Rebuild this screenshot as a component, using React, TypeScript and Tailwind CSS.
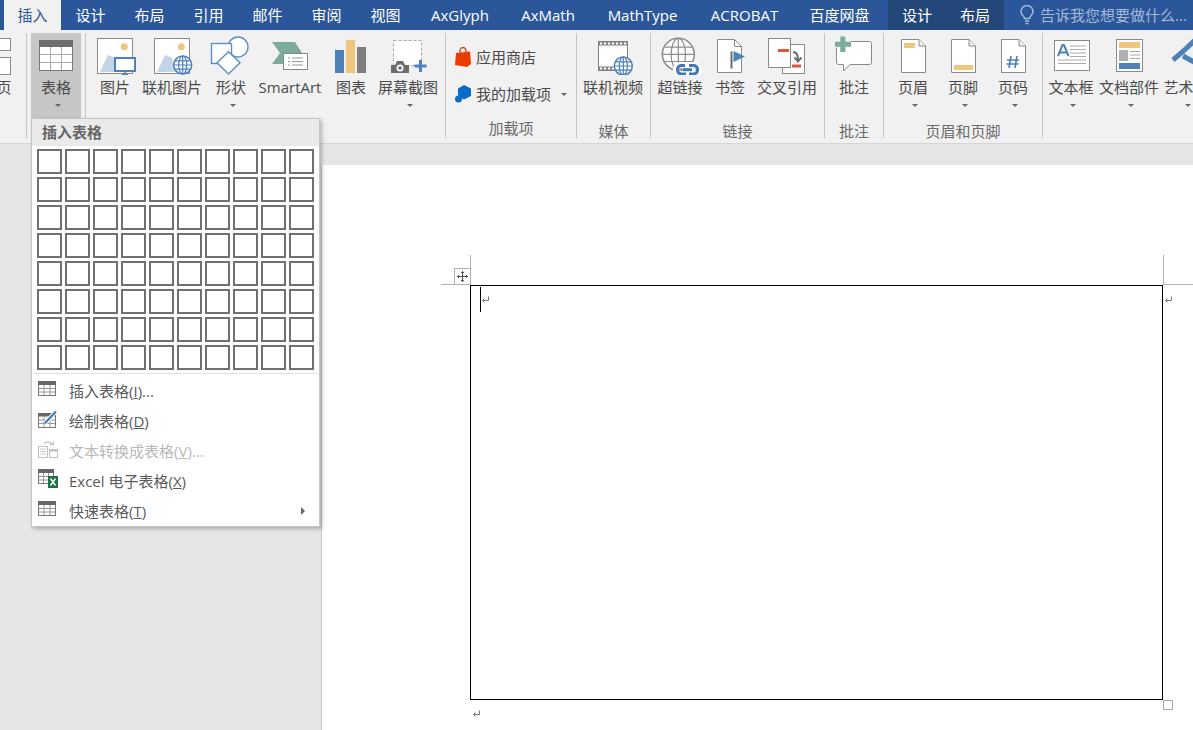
import type { ReactNode } from "react";

const TABS = [
  { label: "设计", w: "w-[59px]" },
  { label: "布局", w: "w-[59px]" },
  { label: "引用", w: "w-[59px]" },
  { label: "邮件", w: "w-[59px]" },
  { label: "审阅", w: "w-[59px]" },
  { label: "视图", w: "w-[59px]" },
  { label: "AxGlyph", w: "w-[90px]" },
  { label: "AxMath", w: "w-[86px]" },
  { label: "MathType", w: "w-[103px]" },
  { label: "ACROBAT", w: "w-[101px]" },
  { label: "百度网盘", w: "w-[89px]" },
];

function Globe({ cx, cy, r = 9, color = "#4e81b8" }: { cx: number; cy: number; r?: number; color?: string }) {
  return (
    <g fill="none" stroke={color} strokeWidth="1.2">
      <circle cx={cx} cy={cy} r={r} fill="#fff" strokeWidth="1.5" />
      <ellipse cx={cx} cy={cy} rx={r * 0.45} ry={r} />
      <path d={`M${cx} ${cy - r}V${cy + r}M${cx - r} ${cy}H${cx + r}M${cx - r * 0.85} ${cy - r * 0.45}H${cx + r * 0.85}M${cx - r * 0.85} ${cy + r * 0.45}H${cx + r * 0.85}`} />
    </g>
  );
}

function Picture({ online }: { online?: boolean }) {
  return (
    <svg width="44" height="40" viewBox="0 0 44 40">
      <rect x="4.5" y="3.5" width="35" height="35" fill="#fff" stroke="#8a8a8a" />
      <circle cx="31.3" cy="11.7" r="3.5" fill="#f0c67f" />
      <path d="M7 37L15 20L22 23L26 37Z" fill="#c1d4e8" />
      {online ? (
        <Globe cx={32.7} cy={30} />
      ) : (
        <>
          <rect x="22" y="23" width="20" height="13" fill="#fff" stroke="#4e81b8" strokeWidth="2" />
          <path d="M32 36V40M29 39.5H35" stroke="#4e81b8" strokeWidth="1.5" />
        </>
      )}
    </svg>
  );
}

function Shapes() {
  return (
    <svg width="44" height="40" viewBox="0 0 44 40" fill="#fff" stroke="#5d8fc2" strokeWidth="1.4">
      <circle cx="29" cy="12" r="10" />
      <rect x="2.5" y="8.5" width="20" height="20" />
      <path d="M19.5 16.7L31 27.8L19.5 39L8 27.8Z" />
    </svg>
  );
}

function SmartArtIcon() {
  return (
    <svg width="44" height="40" viewBox="0 0 44 40">
      <path d="M4 7H27L34 18H15V29H4L12 18Z" fill="#7bab9a" />
      <rect x="15.5" y="18.5" width="24" height="16" fill="#fff" stroke="#888" />
      <path d="M20 23H22M24 23H35M20 26.5H22M24 26.5H35M20 30H22M24 30H35" stroke="#999" />
    </svg>
  );
}

function Chart() {
  return (
    <svg width="44" height="40" viewBox="0 0 44 40">
      <rect x="6" y="15" width="9" height="23" fill="#4e81b8" />
      <rect x="17" y="5" width="9" height="33" fill="#f0c67f" />
      <rect x="28" y="12" width="9" height="26" fill="#7f7f7f" />
    </svg>
  );
}

function Screenshot() {
  return (
    <svg width="44" height="40" viewBox="0 0 44 40">
      <rect x="7.5" y="5.5" width="28" height="25" fill="#fff" stroke="#aaa" strokeDasharray="3 2" />
      <path d="M5 30H9L11 26H17L19 30H23V38H5Z" fill="#6d6d6d" />
      <circle cx="14" cy="33" r="3.5" fill="#fff" />
      <circle cx="14" cy="33" r="1.8" fill="#6d6d6d" />
      <path d="M26 31H28" stroke="#aaa" />
      <path d="M28.5 31H40.5M34.5 25V37" stroke="#4e81b8" strokeWidth="3" />
    </svg>
  );
}

function Film() {
  const holes = [9, 13, 17, 21, 25, 29, 33];
  return (
    <svg width="44" height="40" viewBox="0 0 44 40">
      <rect x="7.5" y="6.5" width="29" height="29" fill="#fff" stroke="#808080" />
      <rect x="7.5" y="6.5" width="29" height="4" fill="#808080" />
      <rect x="7.5" y="31.5" width="29" height="4" fill="#808080" />
      {holes.map((x) => (
        <g key={x} fill="#fff">
          <rect x={x} y="7.5" width="2.2" height="2" />
          <rect x={x} y="32.5" width="2.2" height="2" />
        </g>
      ))}
      <Globe cx={32.3} cy={31} />
    </svg>
  );
}

function Hyperlink() {
  return (
    <svg width="44" height="40" viewBox="0 0 44 40">
      <Globe cx={20.3} cy={19.3} r={16} color="#8c8c8c" />
      <g fill="none" stroke="#fff" strokeWidth="6">
        <rect x="18" y="30" width="13" height="9" rx="4.5" />
        <rect x="28" y="30" width="13" height="9" rx="4.5" />
      </g>
      <g fill="none" stroke="#3e7ab8" strokeWidth="3">
        <path d="M27 30.5H22.5A4.5 4.5 0 0 0 22.5 39H28" />
        <path d="M31 30.5H36.5A4.5 4.5 0 0 1 36.5 39H31" />
        <path d="M25 34.7H34" />
      </g>
    </svg>
  );
}

function Bookmark() {
  return (
    <svg width="44" height="40" viewBox="0 0 44 40">
      <path d="M9.5 4.5H26.5L33.5 11.5V37.5H9.5Z" fill="#fff" stroke="#8a8a8a" />
      <path d="M26.5 4.5V11.5H33.5" fill="none" stroke="#8a8a8a" />
      <rect x="22.5" y="16.5" width="2" height="17" fill="#6d6d6d" />
      <path d="M25.5 16L37 21.5L25.5 27Z" fill="#4e81b8" />
    </svg>
  );
}

function CrossRef() {
  return (
    <svg width="44" height="40" viewBox="0 0 44 40">
      <rect x="17.5" y="9.5" width="22" height="29" fill="#fff" stroke="#8a8a8a" />
      <rect x="3.5" y="3.5" width="22" height="29" fill="#fff" stroke="#8a8a8a" />
      <rect x="13" y="14" width="11" height="3" fill="#d9583b" />
      <rect x="27" y="29.5" width="9" height="3" fill="#d9583b" />
      <path d="M28 17C32 17 33 20 33 25M29.5 22.5L33 26.5L36.5 22.5" fill="none" stroke="#6d6d6d" strokeWidth="2" />
    </svg>
  );
}

function Comment() {
  return (
    <svg width="44" height="40" viewBox="0 0 44 40">
      <path d="M6.5 6.5H37.5A2 2 0 0 1 39.5 8.5V27.5A2 2 0 0 1 37.5 29.5H18L11.5 36V29.5H6.5A2 2 0 0 1 4.5 27.5V8.5A2 2 0 0 1 6.5 6.5Z" fill="#fff" stroke="#8a8a8a" />
      <path d="M3 9.3H19M10.8 2V17" stroke="#eef5f2" strokeWidth="7" />
      <path d="M3 9.3H19M10.8 1.5V17" stroke="#7bab9a" strokeWidth="5" />
    </svg>
  );
}

function PageIcon({ children }: { children?: ReactNode }) {
  return (
    <svg width="44" height="40" viewBox="0 0 44 40">
      <path d="M10.5 4.5H28L34.5 11V37.5H10.5Z" fill="#fff" stroke="#8a8a8a" />
      <path d="M28 4.5V11H34.5" fill="#f1f1f1" stroke="#8a8a8a" />
      {children}
    </svg>
  );
}

function TextBoxIcon() {
  return (
    <svg width="44" height="40" viewBox="0 0 44 40">
      <rect x="5.5" y="5.5" width="35" height="30" fill="#fff" stroke="#8a8a8a" />
      <path d="M9 21L13.5 10H15L19.5 21M11 17.5H17.5" fill="none" stroke="#4e81b8" strokeWidth="2" />
      <path d="M21 11H37M21 14.5H37M21 18H37M21 21.5H37M9 25H37M9 28.5H37" stroke="#aaa" />
    </svg>
  );
}

function DocParts() {
  return (
    <svg width="44" height="40" viewBox="0 0 44 40">
      <rect x="9.5" y="4.5" width="26" height="32" fill="#fff" stroke="#8a8a8a" />
      <rect x="12" y="7" width="21" height="6" fill="#f0c67f" />
      <rect x="12" y="15" width="9" height="11" fill="#b0b0b0" />
      <path d="M23 16.5H33M23 20H33M23 23.5H33" stroke="#aaa" />
      <rect x="12" y="28" width="21" height="6" fill="#4e81b8" />
    </svg>
  );
}

function WordArt() {
  return (
    <svg width="44" height="40" viewBox="0 0 44 40" className="overflow-visible">
      <path d="M9 25C15 20 23 13 31 5L37 33M19 21L30 27" fill="none" stroke="#4e81b8" strokeWidth="5" />
    </svg>
  );
}

function TableIcon() {
  return (
    <svg width="34" height="31" viewBox="0 0 34 31">
      <rect x="0.5" y="0.5" width="33" height="30" fill="#fff" stroke="#7a7a7a" />
      <rect x="0" y="0" width="34" height="7" fill="#6d6d6d" />
      <path d="M11.5 7V30M22.5 7V30M1 14.5H33M1 22.5H33" stroke="#a8a8a8" />
    </svg>
  );
}

function SmallTable() {
  return (
    <svg width="18" height="15" viewBox="0 0 18 15">
      <rect x="0.5" y="0.5" width="17" height="14" fill="#fff" stroke="#777" />
      <rect x="0" y="0" width="18" height="4" fill="#666" />
      <path d="M6 4V14M12 4V14M1 7.5H17M1 11H17" stroke="#999" />
    </svg>
  );
}

function DrawTable() {
  return (
    <svg width="20" height="18" viewBox="0 0 20 18" className="overflow-visible">
      <rect x="0.5" y="3.5" width="17" height="14" fill="#fff" stroke="#777" />
      <rect x="0" y="3" width="18" height="3.5" fill="#666" />
      <path d="M6 6V17M12 6V17M1 10H17M1 13.5H17" stroke="#999" />
      <path d="M7 13L18 1.5" stroke="#fff" strokeWidth="4" />
      <path d="M7 13L18 1.5" stroke="#3e7ab8" strokeWidth="2.2" />
    </svg>
  );
}

function ConvertTable() {
  return (
    <svg width="20" height="18" viewBox="0 0 20 18" className="opacity-60">
      <rect x="0.5" y="6.5" width="9" height="11" fill="#fff" stroke="#999" />
      <path d="M2 9H8M2 11.5H8M2 14H8" stroke="#aaa" />
      <rect x="11.5" y="9.5" width="8" height="8" fill="#fff" stroke="#999" />
      <rect x="11" y="9" width="9" height="2.5" fill="#999" />
      <path d="M6 4C8 1 12 1 14 4.5M12 4.5H15.5V1.5" fill="none" stroke="#999" strokeWidth="1.2" />
    </svg>
  );
}

function ExcelTable() {
  return (
    <svg width="20" height="19" viewBox="0 0 20 19">
      <rect x="0.5" y="0.5" width="15" height="14" fill="#fff" stroke="#777" />
      <rect x="0" y="0" width="16" height="4" fill="#666" />
      <path d="M5.5 4V14M10.5 4V14M1 7.5H15M1 11H15" stroke="#999" />
      <rect x="10" y="7" width="10" height="12" fill="#1f7145" />
      <path d="M12.5 9.5L17.5 16.5M17.5 9.5L12.5 16.5" stroke="#fff" strokeWidth="1.4" />
    </svg>
  );
}

function ReturnMark() {
  return (
    <svg width="8" height="8" viewBox="0 0 8 8" fill="none" stroke="#777">
      <path d="M7.5 0.5V4.5H1.5M3.5 2.5L1.5 4.5L3.5 6.5" />
    </svg>
  );
}

function Caret() {
  return <div className="h-0 w-0 border-x-[3.5px] border-t-[3px] border-x-transparent border-t-[#666]" />;
}

function RibbonButton({ w, label, arrow, children }: { w: string; label: string; arrow?: boolean; children: ReactNode }) {
  return (
    <div className={`${w} flex h-[85px] shrink-0 flex-col items-center`}>
      <div className="mt-[2px] flex h-[40px] items-center justify-center">{children}</div>
      <div className="mt-[2px] h-[20px] whitespace-nowrap text-[15px] leading-[20px] text-[#4a4a4a]">{label}</div>
      {arrow && (
        <div className="ml-[4px] mt-[7px]">
          <Caret />
        </div>
      )}
    </div>
  );
}

function Group({ w, label, pad, children }: { w: string; label?: string; pad?: string; children: ReactNode }) {
  return (
    <div className={`${w} flex h-[105px] shrink-0 flex-col border-r border-[#c6c6c6]`}>
      <div className={`flex h-[85px] ${pad ?? ""}`}>{children}</div>
      {label && <div className="mt-[3px] whitespace-nowrap text-center text-[15px] leading-[20px] text-[#6a6a6a]">{label}</div>}
    </div>
  );
}

function MenuRow({ icon, disabled, right, children }: { icon: ReactNode; disabled?: boolean; right?: boolean; children: ReactNode }) {
  return (
    <div className={`flex h-[30px] items-center text-[15px] ${disabled ? "text-[#b8b8b8]" : "text-[#5a5a5a]"}`}>
      <div className="mb-[5px] w-[37px] shrink-0 pl-[6px]">{icon}</div>
      <span className="whitespace-nowrap">{children}</span>
      {right && <div className="ml-auto mr-[14px] h-0 w-0 border-y-[4px] border-l-[4px] border-y-transparent border-l-[#666]" />}
    </div>
  );
}

export default function App() {
  return (
    <div className="relative flex h-[730px] w-[1193px] flex-col overflow-hidden bg-[#e6e6e6] font-['Open_Sans','Noto_Sans_CJK_SC',sans-serif]">
      <div className="flex h-[30px] shrink-0 items-center bg-[#2b579a] text-[15px] text-white">
        <div className="ml-[4px] flex h-full w-[57px] items-center justify-center bg-[#f1f1f1] text-[#2b579a]">插入</div>
        {TABS.map((t) => (
          <div key={t.label} className={`${t.w} flex h-full shrink-0 items-center justify-center`}>
            {t.label}
          </div>
        ))}
        <div className="ml-[4px] flex h-full w-[116px] shrink-0 bg-[#234779]">
          <div className="flex flex-1 items-center justify-center">设计</div>
          <div className="flex flex-1 items-center justify-center">布局</div>
        </div>
        <div className="ml-[16px] flex items-center gap-[6px] whitespace-nowrap text-[#a3b9d8]">
          <svg width="14" height="20" viewBox="0 0 14 20" fill="none" stroke="#a3b9d8" strokeWidth="1.5">
            <path d="M4.5 13.5C4.5 11 1 10 1 6.5A6 6 0 0 1 13 6.5C13 10 9.5 11 9.5 13.5Z" />
            <path d="M5 16H9M5.5 18.5H8.5" />
          </svg>
          告诉我您想要做什么...
        </div>
      </div>

      <div className="flex h-[114px] shrink-0 overflow-hidden border-b border-[#d6d6d6] bg-[#f1f1f1] pt-[3px]">
        <Group w="w-[27px]">
          <div className="-ml-[8px]">
            <RibbonButton w="w-[24px]" label="页">
              <svg width="24" height="40" viewBox="0 0 24 40">
                <rect x="0.5" y="3.5" width="18" height="12" fill="#fff" stroke="#8a8a8a" />
                <rect x="0.5" y="22.5" width="18" height="17" fill="#fff" stroke="#8a8a8a" />
              </svg>
            </RibbonButton>
          </div>
        </Group>
        <Group w="w-[59px]" pad="pl-[4px]">
          <div className="h-[85px] w-[50px] bg-[#c6c6c6]">
            <RibbonButton w="w-[50px]" label="表格" arrow>
              <TableIcon />
            </RibbonButton>
          </div>
        </Group>
        <Group w="w-[360px]" pad="pl-[2px]">
          <RibbonButton w="w-[54px]" label="图片">
            <Picture />
          </RibbonButton>
          <RibbonButton w="w-[60px]" label="联机图片">
            <Picture online />
          </RibbonButton>
          <RibbonButton w="w-[58px]" label="形状" arrow>
            <Shapes />
          </RibbonButton>
          <RibbonButton w="w-[60px]" label="SmartArt">
            <SmartArtIcon />
          </RibbonButton>
          <RibbonButton w="w-[62px]" label="图表">
            <Chart />
          </RibbonButton>
          <RibbonButton w="w-[52px]" label="屏幕截图" arrow>
            <Screenshot />
          </RibbonButton>
        </Group>
        <Group w="w-[131px]" label="加载项" pad="pl-[9px]">
          <div className="flex flex-col gap-[1px] pt-[6px] text-[15px] text-[#4a4a4a]">
            <div className="flex h-[36px] items-center gap-[5px]">
              <svg width="16" height="20" viewBox="0 0 16 20">
                <path d="M1 6L15 4.5L16 17L12 20L0 18Z" fill="#eb3c00" />
                <path d="M5 7V3.5A3 3 0 0 1 11 3.5V6" fill="none" stroke="#eb3c00" strokeWidth="1.3" />
              </svg>
              <span className="whitespace-nowrap">应用商店</span>
            </div>
            <div className="flex h-[36px] items-center gap-[5px]">
              <svg width="16" height="18" viewBox="0 0 16 18">
                <path d="M9 0L16 3.5V11L9 14.5L3 11V3.5Z" fill="#0a6cc4" />
                <circle cx="3.5" cy="14" r="3.5" fill="#0a6cc4" />
              </svg>
              <span className="whitespace-nowrap">我的加载项</span>
              <div className="ml-[5px]">
                <Caret />
              </div>
            </div>
          </div>
        </Group>
        <Group w="w-[74px]" label="媒体">
          <RibbonButton w="w-[72px]" label="联机视频">
            <Film />
          </RibbonButton>
        </Group>
        <Group w="w-[174px]" label="链接">
          <RibbonButton w="w-[58px]" label="超链接">
            <Hyperlink />
          </RibbonButton>
          <RibbonButton w="w-[42px]" label="书签">
            <Bookmark />
          </RibbonButton>
          <RibbonButton w="w-[72px]" label="交叉引用">
            <CrossRef />
          </RibbonButton>
        </Group>
        <Group w="w-[59px]" label="批注">
          <RibbonButton w="w-[58px]" label="批注">
            <Comment />
          </RibbonButton>
        </Group>
        <Group w="w-[159px]" label="页眉和页脚" pad="pl-[4px]">
          <RibbonButton w="w-[50px]" label="页眉" arrow>
            <PageIcon>
              <rect x="13" y="8" width="11" height="5" fill="#f0c67f" />
            </PageIcon>
          </RibbonButton>
          <RibbonButton w="w-[50px]" label="页脚" arrow>
            <PageIcon>
              <rect x="13" y="30" width="19" height="5" fill="#f0c67f" />
            </PageIcon>
          </RibbonButton>
          <RibbonButton w="w-[50px]" label="页码" arrow>
            <PageIcon>
              <path d="M20 21L18 33M26 21L24 33M16 25H28M15.5 29H27.5" stroke="#4e81b8" strokeWidth="1.6" />
            </PageIcon>
          </RibbonButton>
        </Group>
        <div className="flex h-[85px]">
          <RibbonButton w="w-[56px]" label="文本框" arrow>
            <TextBoxIcon />
          </RibbonButton>
          <RibbonButton w="w-[60px]" label="文档部件" arrow>
            <DocParts />
          </RibbonButton>
          <RibbonButton w="w-[54px]" label="艺术字" arrow>
            <WordArt />
          </RibbonButton>
        </div>
      </div>

      <div className="flex flex-1 pl-[321px] pt-[21px]">
        <div className="flex-1 border-l border-[#c6c6c6] bg-white pl-[148px] pt-[120px]">
          <div className="relative h-[415px] w-[693px] border border-black pl-[10px] pt-[10px]">
            <ReturnMark />
            <div className="absolute left-[9px] top-[1px] h-[25px] w-px bg-black" />
            <div className="absolute -left-px -top-[31px] h-[30px] w-px bg-[#b0b0b0]" />
            <div className="absolute -left-[30px] -top-[2px] h-px w-[29px] bg-[#b0b0b0]" />
            <div className="absolute -left-[17px] -top-[18px] flex h-[17px] w-[17px] items-center justify-center border border-[#b0b0b0] bg-white">
              <svg width="11" height="11" viewBox="0 0 11 11" fill="none" stroke="#555">
                <path d="M5.5 0V11M0 5.5H11M4 1.5H7M4 9.5H7M1.5 4V7M9.5 4V7" />
              </svg>
            </div>
            <div className="absolute -right-[2px] -top-[31px] h-[30px] w-px bg-[#b0b0b0]" />
            <div className="absolute -right-[31px] -top-[2px] h-px w-[30px] bg-[#b0b0b0]" />
            <div className="absolute -right-[10px] top-[10px]">
              <ReturnMark />
            </div>
            <div className="absolute -bottom-[11px] -right-[11px] h-[10px] w-[10px] border border-[#aaa] bg-white" />
          </div>
          <div className="ml-[2px] mt-[10px] flex">
            <ReturnMark />
          </div>
        </div>
      </div>

      <div className="absolute left-[31px] top-[118px] h-[409px] w-[289px] border border-[#c6c6c6] bg-white shadow-[2px_2px_4px_rgba(0,0,0,0.25)]">
        <div className="flex h-[27px] items-center bg-[#eaeaea] pl-[10px] text-[15px] font-bold text-[#666]">插入表格</div>
        <div className="mt-[3px] grid grid-cols-[repeat(10,25px)] gap-[3px] pl-[5px]">
          {Array.from({ length: 80 }, (_, i) => (
            <div key={i} className="h-[25px] border-2 border-[#707070] bg-white" />
          ))}
        </div>
        <div className="mx-[1px] mt-[3px] h-px bg-[#e2e2e2]" />
        <div className="pt-[2px]">
          <MenuRow icon={<SmallTable />}>
            插入表格(<span className="underline">I</span>)...
          </MenuRow>
          <MenuRow icon={<DrawTable />}>
            绘制表格(<span className="underline">D</span>)
          </MenuRow>
          <MenuRow icon={<ConvertTable />} disabled>
            文本转换成表格(<span className="underline">V</span>)...
          </MenuRow>
          <MenuRow icon={<ExcelTable />}>
            Excel 电子表格(<span className="underline">X</span>)
          </MenuRow>
          <MenuRow icon={<SmallTable />} right>
            快速表格(<span className="underline">T</span>)
          </MenuRow>
        </div>
      </div>
    </div>
  );
}
